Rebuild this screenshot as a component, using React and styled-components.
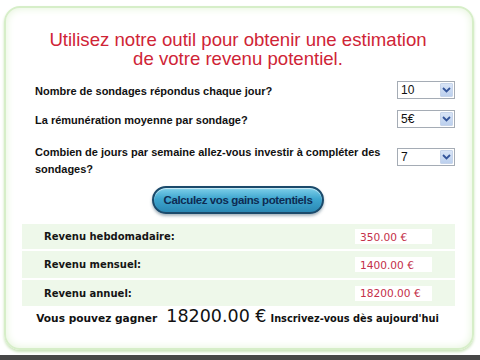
import React, { useState } from "react";
import styled, { createGlobalStyle } from "styled-components";

const GlobalStyle = createGlobalStyle`
  html, body {
    margin: 0;
    padding: 0;
    background: #ffffff;
  }
  body {
    font-family: "Liberation Sans", Arial, sans-serif;
  }
`;

const Page = styled.div`
  width: 480px;
  height: 360px;
  display: flex;
  flex-direction: column;
  overflow: hidden;
  background: #ffffff;
`;

const Card = styled.div`
  height: 340px;
  margin: 6px 6px 0 4px;
  border: 2px solid #d6eec8;
  border-radius: 16px;
  box-shadow: inset 0 0 8px #e2f3d6, 0 2px 3px #cbe4bb;
  display: flex;
  flex-direction: column;
  align-items: stretch;
`;

const Title = styled.h1`
  margin: 22px 0 0;
  font-family: "Liberation Sans", Arial, sans-serif;
  font-weight: normal;
  font-size: 18.6px;
  line-height: 19px;
  color: #cf2436;
  text-align: center;
  padding-right: 2px;
`;

const Form = styled.div`
  display: flex;
  flex-direction: column;
  padding: 0 17px 0 29px;
  margin-top: 12px;
`;

const Row = styled.div`
  display: flex;
  justify-content: space-between;
  align-items: ${(p) => (p.$top ? "flex-start" : "center")};
  margin-bottom: ${(p) => p.$gap}px;
`;

const Label = styled.label`
  max-width: 360px;
  font-family: "Liberation Sans", Arial, sans-serif;
  font-weight: bold;
  font-size: 11px;
  line-height: 17px;
  color: #111;
  padding-top: ${(p) => p.$shift || 0}px;
`;

const Select = styled.div`
  width: 53px;
  height: 16px;
  border: 1px solid #a5acb5;
  background: #fff;
  display: flex;
  align-items: center;
  justify-content: space-between;
  margin-top: ${(p) => p.$shift || 0}px;
  font-family: "Liberation Sans", Arial, sans-serif;
  font-size: 12px;
  color: #111;
  padding-left: 3px;
  box-sizing: content-box;
`;

const Arrow = styled.span`
  width: 13px;
  height: 14px;
  margin-right: 1px;
  background: linear-gradient(#d8e4f6, #bcd0ee);
  border: 1px solid #c6d4ea;
  border-radius: 1px;
  display: flex;
  align-items: center;
  justify-content: center;
  box-sizing: border-box;
`;

const ButtonWrap = styled.div`
  display: flex;
  justify-content: center;
  margin-top: 8px;
  padding-right: 2px;
`;

const CalcButton = styled.button`
  width: 172px;
  height: 28px;
  border-radius: 14px;
  border: 2px solid #1b4a6b;
  background: linear-gradient(#7fd0ea 0%, #3ea6cf 45%, #2a88b4 100%);
  box-shadow: 0 2px 3px rgba(60, 90, 110, 0.45), inset 0 1px 1px rgba(255, 255, 255, 0.6);
  font-family: "Liberation Sans", Arial, sans-serif;
  font-weight: bold;
  font-size: 11.5px;
  letter-spacing: -0.4px;
  color: #0e2b52;
  cursor: pointer;
  padding: 0;
`;

const Results = styled.div`
  margin: 10px 17px 0 16px;
  display: flex;
  flex-direction: column;
  gap: 2px;
  background: #ffffff;
`;

const ResultRow = styled.div`
  height: ${(p) => p.$h}px;
  background: #eef8ea;
  display: flex;
  align-items: center;
  justify-content: space-between;
  padding: 0 23px 0 22px;
`;

const ResultLabel = styled.span`
  font-family: "DejaVu Sans", Verdana, sans-serif;
  font-weight: bold;
  font-size: 10px;
  color: #151515;
`;

const ResultValue = styled.span`
  width: 72px;
  height: 15px;
  background: #ffffff;
  padding-left: 5px;
  display: flex;
  align-items: center;
  font-family: "DejaVu Sans", Verdana, sans-serif;
  font-size: 10.6px;
  color: #c4304a;
`;

const Summary = styled.p`
  margin: 0;
  text-align: center;
  font-family: "DejaVu Sans", Verdana, sans-serif;
  font-weight: bold;
  font-size: 10.6px;
  line-height: 20px;
  color: #111;
  padding-right: 3px;
  white-space: nowrap;
`;

const Big = styled.span`
  font-family: "DejaVu Sans", Verdana, sans-serif;
  font-weight: normal;
  font-size: 17.5px;
  margin: 0 4px 0 9px;
`;

const Small = styled.span`
  font-size: 9.8px;
`;

const BottomBar = styled.div`
  margin-top: auto;
  height: 5px;
  background: #474747;
`;

function Chevron() {
  return (
    <svg width="9" height="6" viewBox="0 0 9 6">
      <path d="M1 1 L4.5 4.5 L8 1" fill="none" stroke="#34559a" strokeWidth="1.8" />
    </svg>
  );
}

function Dropdown({ value, shift }) {
  return (
    <Select $shift={shift}>
      <span>{value}</span>
      <Arrow>
        <Chevron />
      </Arrow>
    </Select>
  );
}

export default function App() {
  const [perDay] = useState(10);
  const [pay] = useState(5);
  const [days] = useState(7);

  const weekly = perDay * pay * days;
  const monthly = weekly * 4;
  const yearly = weekly * 52;

  return (
    <Page>
      <GlobalStyle />
      <Card>
        <Title>
          Utilisez notre outil pour obtenir une estimation
          <br />
          de votre revenu potentiel.
        </Title>
        <Form>
          <Row $gap={9}>
            <Label $shift={3}>Nombre de sondages répondus chaque jour?</Label>
            <Dropdown value={perDay} />
          </Row>
          <Row $gap={15}>
            <Label $shift={3}>La rémunération moyenne par sondage?</Label>
            <Dropdown value={`${pay}€`} />
          </Row>
          <Row $top $gap={0}>
            <Label>
              Combien de jours par semaine allez-vous investir à compléter des
              sondages?
            </Label>
            <Dropdown value={days} shift={4} />
          </Row>
        </Form>
        <ButtonWrap>
          <CalcButton>Calculez vos gains potentiels</CalcButton>
        </ButtonWrap>
        <Results>
          <ResultRow $h={25}>
            <ResultLabel>Revenu hebdomadaire:</ResultLabel>
            <ResultValue>{weekly.toFixed(2)} €</ResultValue>
          </ResultRow>
          <ResultRow $h={27}>
            <ResultLabel>Revenu mensuel:</ResultLabel>
            <ResultValue>{monthly.toFixed(2)} €</ResultValue>
          </ResultRow>
          <ResultRow $h={26}>
            <ResultLabel>Revenu annuel:</ResultLabel>
            <ResultValue>{yearly.toFixed(2)} €</ResultValue>
          </ResultRow>
        </Results>
        <Summary>
          Vous pouvez gagner
          <Big>{yearly.toFixed(2)} €</Big>
          <Small>Inscrivez-vous dès aujourd'hui</Small>
        </Summary>
      </Card>
      <BottomBar />
    </Page>
  );
}
